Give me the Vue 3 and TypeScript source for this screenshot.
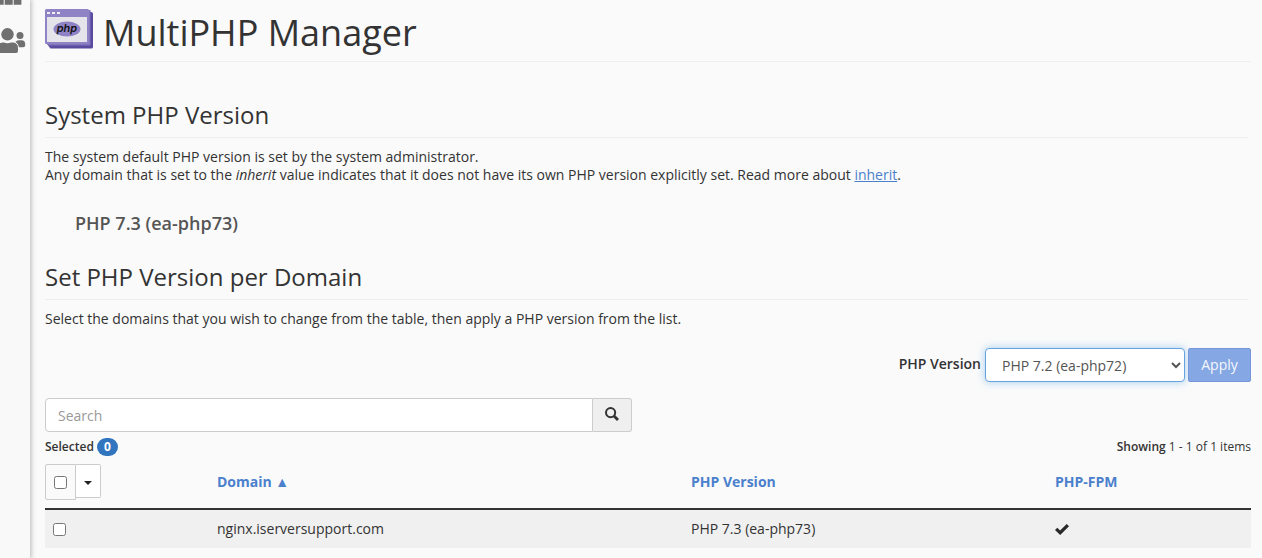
<script setup lang="ts">
import { computed, ref } from 'vue'

interface DomainRow {
  name: string
  version: string
  fpm: boolean
}

const rows: DomainRow[] = [
  { name: 'nginx.iserversupport.com', version: 'PHP 7.3 (ea-php73)', fpm: true },
]
const versions: string[] = ['PHP 7.2 (ea-php72)', 'PHP 7.3 (ea-php73)']

const search = ref<string>('')
const version = ref<string>(versions[0])
const selected = ref<string[]>([])

const shown = computed<DomainRow[]>(() => rows.filter((r) => r.name.includes(search.value)))
const allSelected = computed<boolean>({
  get: () => selected.value.length === rows.length,
  set: (on) => {
    selected.value = on ? rows.map((r) => r.name) : []
  },
})
</script>

<template>
  <div class="page">
    <nav class="sidebar" aria-label="Main">
      <a href="#" class="side-link" aria-label="Tools">
        <svg class="tools-icon" viewBox="0 0 22 6" width="22" height="6">
          <path d="M0 0h3.700v4.800H0zM4.700 0h8v4.800h-8zM13.700 0h7.700v4.800h-7.700z" fill="#6f6f6f" />
        </svg>
      </a>
      <a href="#" class="side-link" aria-label="User manager">
        <svg viewBox="0 0 26 26" width="26" height="26" fill="#707070">
          <circle cx="7.500" cy="6.300" r="6.200" />
          <circle cx="20" cy="7.500" r="3.500" />
          <path d="M-2 25v-5.500q0-5 5-5h1q3.500 1.500 7 0h1.500q5.500 0 5.500 5.500v3q0 2-2 2z" />
          <path d="M15.500 13.700q1.500-1.500 3-1.500h3q3.700 0 3.700 4v1q0 2-2 2h-4.200q-.3-3.500-3.500-5.500z" />
        </svg>
      </a>
    </nav>

    <main class="content">
      <h1 class="title">
        <svg class="logo" viewBox="0 0 48 40" width="48" height="40" aria-hidden="true">
          <path d="M3 3h43q2 0 2 2v33q0 1.500-1.500 1.500H5.500L2 35z" fill="#5a4a9f" />
          <path d="M2 1h43.500v35.500H4L1 34z" fill="#8074bb" />
          <rect x="0" y="0" width="44" height="35" rx="1.500" fill="#8f83c5" />
          <rect x="2" y="8" width="40" height="25" fill="#e5e4ea" />
          <g fill="#f0eff7">
            <rect x="2" y="3" width="3" height="2" />
            <rect x="7" y="3" width="3" height="2" />
            <rect x="12" y="3" width="3" height="2" />
          </g>
          <ellipse cx="22" cy="20" rx="13.500" ry="7.500" fill="#8f83c5" />
          <text x="22" y="23" class="logo-text" text-anchor="middle">php</text>
        </svg>
        <span>MultiPHP Manager</span>
      </h1>

      <section class="section">
        <h2>System PHP Version</h2>
        <p>
          The system default PHP version is set by the system administrator.<br />
          Any domain that is set to the <em>inherit</em> value indicates that it does not have its own PHP version
          explicitly set. Read more about <a href="#">inherit</a>.
        </p>
        <div class="system-version">PHP 7.3 (ea-php73)</div>
      </section>

      <section class="section">
        <h2>Set PHP Version per Domain</h2>
        <p>Select the domains that you wish to change from the table, then apply a PHP version from the list.</p>
      </section>

      <form class="apply-bar" @submit.prevent>
        <label for="version">PHP Version</label>
        <select id="version" v-model="version">
          <option v-for="v in versions" :key="v" :value="v">{{ v }}</option>
        </select>
        <button type="submit" class="apply">Apply</button>
      </form>

      <form class="search" @submit.prevent>
        <input v-model="search" type="text" placeholder="Search" aria-label="Search" />
        <button type="submit" aria-label="Search">
          <svg viewBox="0 0 14 14" width="14" height="14" fill="none" stroke="#333">
            <circle cx="5.600" cy="5.600" r="4.600" stroke-width="2" />
            <path d="M9 9l4 4" stroke-width="2.800" />
          </svg>
        </button>
      </form>

      <div class="status">
        <div><strong>Selected</strong> <span class="badge">{{ selected.length }}</span></div>
        <div><strong>Showing</strong> 1 - {{ shown.length }} of {{ rows.length }} items</div>
      </div>

      <table>
        <thead>
          <tr>
            <th class="col-check">
              <div class="check-group">
                <label class="check-all"><input v-model="allSelected" type="checkbox" aria-label="Select all" /></label>
                <button type="button" class="check-menu" aria-label="Selection options"><i class="caret"></i></button>
              </div>
            </th>
            <th class="col-domain"><a href="#">Domain ▲</a></th>
            <th class="col-version"><a href="#">PHP Version</a></th>
            <th class="col-fpm"><a href="#">PHP-FPM</a></th>
          </tr>
        </thead>
        <tbody>
          <tr v-for="row in shown" :key="row.name">
            <td class="cell-check">
              <input v-model="selected" type="checkbox" :value="row.name" :aria-label="row.name" />
            </td>
            <td>{{ row.name }}</td>
            <td>{{ row.version }}</td>
            <td>
              <svg v-if="row.fpm" class="tick" viewBox="0 0 14 11" width="14" height="11" role="img" aria-label="Enabled">
                <path d="M0 6l2.300-2.300 2.800 2.700L11.700 0 14 2.200 5.200 11z" fill="#292929" />
              </svg>
            </td>
          </tr>
        </tbody>
      </table>
    </main>
  </div>
</template>

<style>
html {
  background: #fafafa;
}
</style>

<style scoped>
* {
  box-sizing: border-box;
}
.page {
  display: flex;
  min-height: 100vh;
  background: #fafafa;
  color: #333;
  font-family: 'Open Sans', 'Noto Sans', sans-serif;
  font-size: 14px;
  line-height: 18px;
}
.sidebar {
  flex: 0 0 30px;
  overflow: hidden;
  background: #f9f9f9;
  box-shadow: 0 0 5px 1px rgba(0, 0, 0, 0.28);
}
.side-link {
  display: block;
}
.side-link svg {
  display: block;
}
.tools-icon {
  margin-bottom: 22px;
}
.content {
  flex: 1;
  min-width: 0;
  padding: 8px 11px 9px 15px;
}
h1,
h2,
p {
  margin: 0;
  font-weight: 400;
}
.title {
  display: flex;
  gap: 10px;
  height: 54px;
  border-bottom: 1px solid #eee;
  font-size: 36px;
  line-height: 50px;
}
.logo {
  margin-top: 1px;
}
.logo-text {
  font: italic 600 11px Inter, 'Open Sans', sans-serif;
  fill: #111;
}
.section {
  padding-right: 3px;
}
.title + .section {
  margin-top: 38px;
}
h2 {
  padding-bottom: 7px;
  border-bottom: 1px solid #eee;
  font-size: 24px;
  line-height: 30px;
}
.section p {
  margin-top: 10px;
}
a {
  color: #4a80cc;
}
.system-version {
  padding: 29px 30px;
  color: #555;
  font-size: 18px;
  font-weight: 600;
  line-height: 20px;
}
.apply-bar {
  display: flex;
  justify-content: flex-end;
  margin-top: 20px;
}
.apply-bar label {
  margin-right: 4px;
  font-weight: 600;
  line-height: 32px;
}
select {
  width: 200px;
  height: 34px;
  margin-right: 3px;
  padding: 6px 12px;
  border: 1px solid #66a3de;
  border-radius: 4px;
  background: #fff;
  color: #555;
  font: inherit;
  box-shadow: 0 0 8px rgba(102, 175, 233, 0.6);
}
.apply {
  width: 63px;
  height: 34px;
  padding: 0;
  border: 1px solid #7698db;
  border-radius: 2px;
  background: #85a7e3;
  color: #f4f7fd;
  font: inherit;
}
.search {
  display: flex;
  width: calc(50% - 16px);
  height: 34px;
  margin-top: 16px;
}
.search input {
  flex: 1;
  min-width: 0;
  padding: 7px 12px 5px;
  border: 1px solid #ccc;
  border-radius: 4px 0 0 4px;
  background: #fff;
  font: inherit;
}
.search input::placeholder {
  color: #999;
}
.search button {
  display: flex;
  align-items: center;
  justify-content: center;
  width: 39px;
  padding: 0 0 2px;
  border: 1px solid #ccc;
  border-left: 0;
  border-radius: 0 3px 3px 0;
  background: #efefef;
}
.status {
  display: flex;
  justify-content: space-between;
  margin-top: 6px;
  font-size: 12px;
}
.status strong {
  font-weight: 600;
}
.badge {
  display: inline-block;
  min-width: 21px;
  border-radius: 9px;
  background: #3175bf;
  color: #fff;
  font-weight: 700;
  text-align: center;
}
table {
  width: 100%;
  margin-top: 8px;
  border-collapse: collapse;
  table-layout: fixed;
}
th,
td {
  padding: 0;
  text-align: left;
}
th {
  height: 45px;
  padding-bottom: 8px;
  border-bottom: 2px solid #333;
}
th a {
  font-weight: 700;
  text-decoration: none;
}
.col-check {
  width: 172px;
}
.col-domain {
  width: 474px;
}
.col-version {
  width: 364px;
}
td {
  height: 39px;
  background: #f0f0f0;
}
input[type='checkbox'] {
  display: block;
  width: 13px;
  height: 13px;
  margin: 0;
}
.cell-check {
  padding-left: 8px;
}
.check-group {
  display: flex;
  align-items: flex-start;
}
.check-all {
  display: flex;
  align-items: center;
  justify-content: center;
  width: 31px;
  height: 36px;
  border: 1px solid #ccc;
  border-radius: 2px 0 0 2px;
}
.check-menu {
  display: flex;
  align-items: center;
  justify-content: center;
  width: 25px;
  height: 34px;
  padding: 3px 0 0;
  border: 1px solid #ccc;
  border-left: 0;
  border-radius: 0 2px 2px 0;
  background: #fff;
}
.caret {
  border: 4px solid transparent;
  border-top-color: #222;
  border-bottom: 0;
}
.tick {
  display: block;
}
</style>
